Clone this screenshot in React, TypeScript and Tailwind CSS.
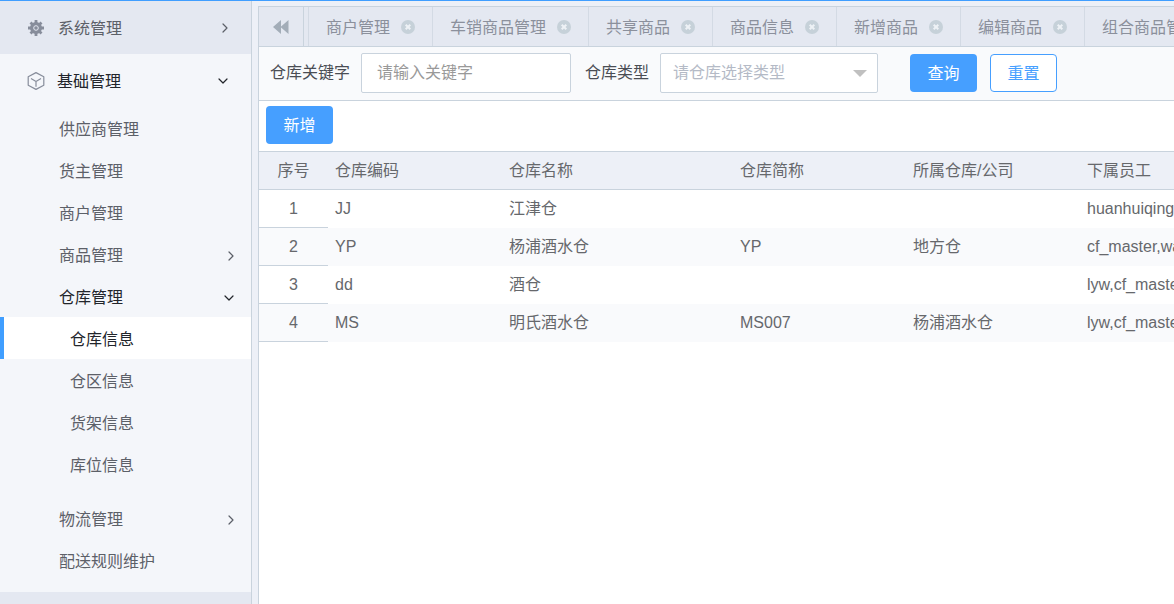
import { ChevronDown, ChevronRight } from "lucide-react";
import clsx from "clsx";

const BASIC_LINKS = ["供应商管理", "货主管理", "商户管理"];

const WAREHOUSE_LINKS = ["仓库信息", "仓区信息", "货架信息", "库位信息"];

const TABS = ["商户管理", "车销商品管理", "共享商品", "商品信息", "新增商品", "编辑商品", "组合商品管理"];

const COLUMNS = [
  { label: "序号", width: "w-[69px]" },
  { label: "仓库编码", width: "w-[174px]" },
  { label: "仓库名称", width: "w-[231px]" },
  { label: "仓库简称", width: "w-[173px]" },
  { label: "所属仓库/公司", width: "w-[174px]" },
  { label: "下属员工", width: "w-[240px]" },
];

const ROWS = [
  ["JJ", "江津仓", "", "", "huanhuiqing"],
  ["YP", "杨浦酒水仓", "YP", "地方仓", "cf_master,wangwu"],
  ["dd", "酒仓", "", "", "lyw,cf_master"],
  ["MS", "明氏酒水仓", "MS007", "杨浦酒水仓", "lyw,cf_master"],
];

function GearIcon() {
  return (
    <svg viewBox="0 0 16 16" className="size-4 shrink-0 text-[#878d9b]" aria-hidden="true">
      <g stroke="currentColor" strokeWidth="2.8">
        <path d="M8 0v16M0 8h16M2.5 2.5l11 11M13.5 2.5l-11 11" />
      </g>
      <circle cx="8" cy="8" r="6" fill="currentColor" />
      <circle cx="8" cy="8" r="2.3" fill="currentColor" stroke="#e4e8f1" strokeWidth="1" />
    </svg>
  );
}

function CubeIcon() {
  return (
    <svg
      viewBox="0 0 18 18"
      className="size-[18px] shrink-0 text-[#878d9b]"
      fill="none"
      stroke="currentColor"
      strokeWidth="1.2"
      strokeLinejoin="round"
      aria-hidden="true"
    >
      <path d="M9 .6l7.8 4.2v8.4L9 17.4 1.2 13.2V4.8z" />
      <path d="M4 6.6l5 2.8 5-2.8M9 9.4v5.4" />
    </svg>
  );
}

function CloseIcon() {
  return (
    <svg viewBox="0 0 14 14" className="size-3.5" aria-hidden="true">
      <circle cx="7" cy="7" r="7" fill="#c6d1d9" />
      <path d="M4.7 4.7l4.6 4.6M9.3 4.7L4.7 9.3" stroke="#eef2f6" strokeWidth="2" />
    </svg>
  );
}

function Sidebar() {
  return (
    <nav className="flex w-[252px] shrink-0 flex-col border-r border-[#c9d3dd] bg-[#e4e8f1] text-[#5c6068]">
      <button className="flex h-[53px] items-center pr-[18px] pl-7 text-left">
        <GearIcon />
        <span className="ml-3.5 flex-1 pt-0.5">系统管理</span>
        <ChevronRight className="size-4" strokeWidth={1.8} />
      </button>

      <div className="bg-[#f4f6fa] pb-[11px]">
        <button className="flex h-[53px] w-full items-center pr-5 pl-[27px] text-left text-[#22252b]">
          <CubeIcon />
          <span className="ml-3 flex-1 pt-0.5">基础管理</span>
          <ChevronDown className="size-4" strokeWidth={1.8} />
        </button>

        {BASIC_LINKS.map((label) => (
          <a key={label} href="#" className="flex h-[42px] items-center pt-[3px] pl-[59px]">
            {label}
          </a>
        ))}
        <button className="flex h-[42px] w-full items-center pt-[3px] pr-3 pl-[59px] text-left">
          <span className="flex-1">商品管理</span>
          <ChevronRight className="size-4" strokeWidth={1.8} />
        </button>
        <button className="flex h-[42px] w-full items-center pt-[3px] pr-3.5 pl-[59px] text-left text-[#22252b]">
          <span className="flex-1">仓库管理</span>
          <ChevronDown className="size-4" strokeWidth={1.8} />
        </button>

        <div className="pb-3">
          {WAREHOUSE_LINKS.map((label, i) => (
            <a
              key={label}
              href="#"
              className={clsx(
                "flex h-[42px] items-center border-l-4 pt-[3px] pl-[66px]",
                i === 0 ? "border-[#409eff] bg-white text-[#22252b]" : "border-transparent"
              )}
            >
              {label}
            </a>
          ))}
        </div>

        <button className="flex h-[42px] w-full items-center pt-[3px] pr-3 pl-[59px] text-left">
          <span className="flex-1">物流管理</span>
          <ChevronRight className="size-4" strokeWidth={1.8} />
        </button>
        <a href="#" className="flex h-[42px] items-center pt-[3px] pl-[59px]">
          配送规则维护
        </a>
      </div>
    </nav>
  );
}

function TabBar() {
  return (
    <div className="flex h-[41px] overflow-hidden border-y border-[#c9d3dd] bg-[#e4e8f1] text-[#8b909c]">
      <button
        aria-label="向左滚动"
        className="mr-1 flex w-[45px] shrink-0 items-center justify-center border-r border-[#c9d3dd]"
      >
        <svg viewBox="0 0 16 14" className="h-3.5 w-4" fill="#a3adb8" aria-hidden="true">
          <path d="M8 0v14L0 7zM15.5 0v14l-8-7z" />
        </svg>
      </button>
      <div className="flex border-l border-[#d3dae4]">
        {TABS.map((tab) => (
          <div key={tab} className="flex shrink-0 items-center gap-[11px] border-r border-[#d3dae4] px-[17px]">
            <a href="#" className="pt-0.5 whitespace-nowrap">
              {tab}
            </a>
            <button aria-label={`关闭${tab}`}>
              <CloseIcon />
            </button>
          </div>
        ))}
      </div>
    </div>
  );
}

function FilterBar() {
  return (
    <form className="flex h-[54px] items-center border-b border-[#c9d3dd] bg-[#f9fafc] pb-0.5 pl-[11px]">
      <label htmlFor="keyword" className="shrink-0 text-[#4a4d54]">
        仓库关键字
      </label>
      <input
        id="keyword"
        type="text"
        placeholder="请输入关键字"
        className="ml-[11px] h-10 w-[210px] rounded-xs border border-[#c9d3dd] bg-white px-[15px] placeholder:text-[#999] focus:outline-none"
      />
      <label htmlFor="type" className="ml-3.5 shrink-0 text-[#4a4d54]">
        仓库类型
      </label>
      <div className="relative ml-[11px] shrink-0">
        <select
          id="type"
          className="h-10 w-[218px] appearance-none rounded-xs border border-[#c9d3dd] bg-white px-3 text-[#b4bac6] focus:outline-none"
        >
          <option>请仓库选择类型</option>
        </select>
        <svg viewBox="0 0 14 7" className="pointer-events-none absolute top-[17px] right-[11px] h-[7px] w-3.5" aria-hidden="true">
          <path d="M0 0h14L7 7z" fill="#c0c0c0" />
        </svg>
      </div>
      <button type="button" className="ml-8 h-[38px] w-[67px] shrink-0 rounded bg-[#469fff] pt-0.5 text-white">
        查询
      </button>
      <button
        type="reset"
        className="ml-[13px] h-[38px] w-[67px] shrink-0 rounded border border-[#469fff] bg-white pt-0.5 text-[#469fff]"
      >
        重置
      </button>
    </form>
  );
}

function WarehouseTable() {
  return (
    <div className="overflow-hidden">
      <table className="w-[1061px] table-fixed border-separate border-spacing-0 text-left text-[#66686c]">
        <thead>
          <tr className="h-[39px] bg-[#edf0f7]">
            {COLUMNS.map((col, i) => (
              <th
                key={col.label}
                className={clsx(
                  "border-y border-[#c9d3dd] p-0 font-normal whitespace-nowrap",
                  col.width,
                  i === 0 ? "text-center" : "pl-[7px]"
                )}
              >
                {col.label}
              </th>
            ))}
          </tr>
        </thead>
        <tbody>
          {ROWS.map((row, i) => (
            <tr key={row[0]} className="h-[38px] even:bg-[#f9fafc]">
              <td className="border-b border-[#c9d3dd] p-0 text-center">{i + 1}</td>
              {row.map((cell, j) => (
                <td key={j} className="p-0 pl-[7px] whitespace-nowrap">
                  {cell}
                </td>
              ))}
            </tr>
          ))}
        </tbody>
      </table>
    </div>
  );
}

export default function App() {
  return (
    <div className="flex min-h-screen border-t border-[#409eff] bg-[#edf0f7] font-['Liberation_Sans','Noto_Sans_CJK_SC',sans-serif] text-base">
      <Sidebar />
      <main className="mt-[5px] ml-1.5 min-w-0 flex-1 border-l border-[#c9d3dd] bg-white">
        <TabBar />
        <FilterBar />
        <div className="px-[7px] pt-[5px] pb-[7px]">
          <button className="h-[38px] w-[67px] rounded bg-[#469fff] pt-0.5 text-white">新增</button>
        </div>
        <WarehouseTable />
      </main>
    </div>
  );
}
